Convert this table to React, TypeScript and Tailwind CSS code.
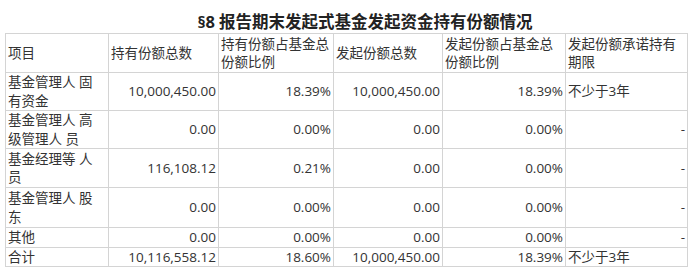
const rows: { name: React.ReactNode; a: string; b: string; c: string; d: string; e: string; h: string }[] = [
  { name: <>基金管理人 固<br />有资金</>, a: "10,000,450.00", b: "18.39%", c: "10,000,450.00", d: "18.39%", e: "不少于3年", h: "h-[38px]" },
  { name: <>基金管理人 高<br />级管理人 员</>, a: "0.00", b: "0.00%", c: "0.00", d: "0.00%", e: "-", h: "h-[38px]" },
  { name: <>基金经理等 人<br />员</>, a: "116,108.12", b: "0.21%", c: "0.00", d: "0.00%", e: "-", h: "h-[39px]" },
  { name: <>基金管理人 股<br />东</>, a: "0.00", b: "0.00%", c: "0.00", d: "0.00%", e: "-", h: "h-[40px]" },
  { name: "其他", a: "0.00", b: "0.00%", c: "0.00", d: "0.00%", e: "-", h: "h-[19px]" },
  { name: "合计", a: "10,116,558.12", b: "18.60%", c: "10,000,450.00", d: "18.39%", e: "不少于3年", h: "h-[18px]" },
];

const cell = "border border-[#d4d4d4] px-[2px] py-0 align-middle whitespace-nowrap overflow-hidden";

export default function App() {
  return (
    <div className="w-[699px] h-[270px] bg-white text-[#333] font-['Open_Sans','Noto_Sans_CJK_SC',sans-serif] text-[13.5px] leading-[18.5px]">
      <div className="pt-[11px] pl-[31px] h-[33px] text-center text-[16.5px] leading-[22px] font-bold text-[#222]">
        §8 报告期末发起式基金发起资金持有份额情况
      </div>
      <table className="ml-[5px] w-[682px] table-fixed border-collapse">
        <colgroup>
          <col className="w-[103px]" />
          <col className="w-[110px]" />
          <col className="w-[115px]" />
          <col className="w-[109px]" />
          <col className="w-[123px]" />
          <col className="w-[122px]" />
        </colgroup>
        <thead>
          <tr className="h-[39px]">
            <th className={`${cell} text-left font-normal`}>项目</th>
            <th className={`${cell} text-left font-normal`}>持有份额总数</th>
            <th className={`${cell} text-left font-normal`}>持有份额占基金总<br />份额比例</th>
            <th className={`${cell} text-left font-normal`}>发起份额总数</th>
            <th className={`${cell} text-left font-normal`}>发起份额占基金总<br />份额比例</th>
            <th className={`${cell} text-left font-normal`}>发起份额承诺持有<br />期限</th>
          </tr>
        </thead>
        <tbody>
          {rows.map((r, i) => (
            <tr key={i} className={r.h}>
              <td className={cell}>{r.name}</td>
              <td className={`${cell} text-right`}>{r.a}</td>
              <td className={`${cell} text-right`}>{r.b}</td>
              <td className={`${cell} text-right`}>{r.c}</td>
              <td className={`${cell} text-right`}>{r.d}</td>
              <td className={`${cell} ${r.e === "-" ? "text-right" : "text-left"}`}>{r.e}</td>
            </tr>
          ))}
        </tbody>
      </table>
    </div>
  );
}
